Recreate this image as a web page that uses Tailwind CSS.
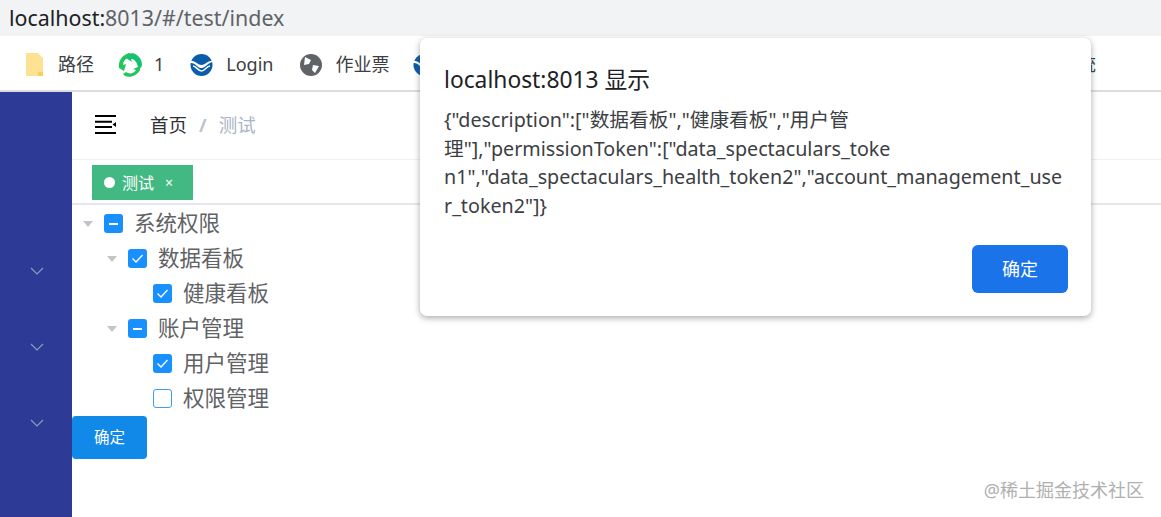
<!DOCTYPE html>
<html lang="en">
<head>
  <meta charset="UTF-8" />
  <title>localhost:8013</title>
  <script src="https://cdn.jsdelivr.net/npm/@tailwindcss/browser@4"></script>
</head>
<body class="relative h-[517px] w-[1161px] overflow-hidden bg-white font-['Noto_Sans','Noto_Sans_CJK_SC',sans-serif]">

  <!-- browser chrome -->
  <div class="flex h-9 items-center bg-[#f1f3f4] pl-[9px] text-[21.400px] text-[#5f6368]">
    <span class="text-[#202124]">localhost:</span><span>8013/#/test/index</span>
  </div>
  <div class="flex h-[56px] items-center border-b-2 border-[#dadce0] pl-[25px] pt-[3px] text-[18px] text-[#3c4043]">
    <svg class="h-[23px] w-[18px]" viewBox="0 0 18 23"><path d="M1 0h12l5 5v18H1z" fill="#fde293"/><path d="M13 19h5v4h-5z" fill="#f6cf5f"/></svg>
    <span class="ml-[15px]">路径</span>
    <svg class="ml-[24px] h-[24px] w-[24px]" viewBox="0 0 24 24" fill="#22c55e"><path d="M1 15C0 8 4 2 11 0l3 1-2 3-2 1c-3 1-5 4-5 7l3-1-2 7z"/><path d="M14 0c6 1 10 6 10 12l-1 3-3-1-1-3c-1-3-3-5-6-5l1 3-6-4z" fill="#16c172"/><path d="M22 17c-3 6-10 8-15 6l-2-2 3-2 2 1c3 1 6 0 8-3l-3-1 7-3z"/></svg>
    <span class="ml-[12px]">1</span>
    <svg class="ml-[26px] h-[24px] w-[23px]" viewBox="0 0 23 24" fill="none"><circle cx="11.500" cy="12" r="11" fill="#0b5cab"/><path d="M0 8c5-1 7 4 11.500 4S18 7 23 8v1c-5 0-7 6-11.500 6S5 9 0 10z" fill="#fff"/><path d="M3 13c3 0 5 5 8.500 5s5-5 8.500-5" stroke="#fff" stroke-width="1.500"/></svg>
    <span class="ml-[13px]">Login</span>
    <svg class="ml-[27px] h-[22px] w-[22px]" viewBox="0 0 22 22"><circle cx="11" cy="11" r="11" fill="#5f6368"/><path d="M5 3l6 3-2 4-5 1zM13 11l6 1-4 7-3-3z" fill="#fff"/></svg>
    <span class="ml-[13px]">作业票</span>
    <svg class="ml-[24px] h-[24px] w-[23px]" viewBox="0 0 23 24" fill="none"><circle cx="11.500" cy="12" r="11" fill="#0b5cab"/><path d="M0 8c5-1 7 4 11.500 4S18 7 23 8v1c-5 0-7 6-11.500 6S5 9 0 10z" fill="#fff"/></svg>
    <span class="ml-auto mr-[65px]">系统</span>
  </div>

  <div class="flex h-[425px]">
    <!-- sidebar -->
    <aside class="flex w-[72px] shrink-0 flex-col items-center gap-[66px] bg-[#2d3a96] pt-[174px] pl-[2px]">
      <svg class="h-[10px] w-[14px]" viewBox="0 0 14 10" fill="none" stroke="#8f9bb3" stroke-width="1.200"><path d="M1 2l6 6 6-6"/></svg>
      <svg class="h-[10px] w-[14px]" viewBox="0 0 14 10" fill="none" stroke="#8f9bb3" stroke-width="1.200"><path d="M1 2l6 6 6-6"/></svg>
      <svg class="h-[10px] w-[14px]" viewBox="0 0 14 10" fill="none" stroke="#8f9bb3" stroke-width="1.200"><path d="M1 2l6 6 6-6"/></svg>
    </aside>

    <main class="min-w-0 flex-1">
      <!-- navbar -->
      <div class="flex h-[68px] items-center border-b border-[#f0f1f2] pb-[2px] pl-[23px] text-[18.500px]">
        <svg class="h-[19px] w-[22px]" viewBox="0 0 22 19" fill="#000"><path d="M0 0h21v2H0zM0 5.700h17v2H0zM0 11h17v2H0zM0 17h21v2H0zM17.500 9.500l3.500-2.500v5z"/></svg>
        <span class="ml-[33px] text-[#303133]">首页</span>
        <span class="mx-[12px] font-bold text-[#c0c4cc]">/</span>
        <span class="text-[#a9b4c6]">测试</span>
      </div>

      <!-- tags -->
      <div class="flex h-[45px] items-start border-b-2 border-[#e4e6e9] pl-[20px] pt-[5px]">
        <div class="flex h-[35px] w-[101px] items-center bg-[#42b983] pl-[12px] text-white">
          <span class="h-[11px] w-[11px] rounded-full bg-white"></span>
          <span class="ml-[7px] text-[16px]">测试</span>
          <span class="ml-[11px] text-[14px]">×</span>
        </div>
      </div>

      <!-- tree -->
      <div class="grid pt-[1px] text-[21.500px] text-[#606266]">
        <div class="flex h-[35px] items-center pl-[11px]">
          <span class="h-0 w-0 border-x-[5px] border-t-[6px] border-x-transparent border-t-[#c0c4cc]"></span>
          <span class="ml-[11px] flex h-[19px] w-[19px] items-center justify-center rounded-[3px] bg-[#1890ff]"><span class="h-[2px] w-[9px] bg-white"></span></span>
          <span class="ml-[11px]">系统权限</span>
        </div>
        <div class="flex h-[35px] items-center pl-[35px]">
          <span class="h-0 w-0 border-x-[5px] border-t-[6px] border-x-transparent border-t-[#c0c4cc]"></span>
          <span class="ml-[11px] flex h-[19px] w-[19px] items-center justify-center rounded-[3px] bg-[#1890ff]"><svg class="h-[19px] w-[19px]" viewBox="0 0 19 19" fill="none" stroke="#fff" stroke-width="1.300"><path d="M4.500 9.500l3.500 3.500 6.500-7"/></svg></span>
          <span class="ml-[11px]">数据看板</span>
        </div>
        <div class="flex h-[35px] items-center pl-[81px]">
          <span class="flex h-[19px] w-[19px] items-center justify-center rounded-[3px] bg-[#1890ff]"><svg class="h-[19px] w-[19px]" viewBox="0 0 19 19" fill="none" stroke="#fff" stroke-width="1.300"><path d="M4.500 9.500l3.500 3.500 6.500-7"/></svg></span>
          <span class="ml-[11px]">健康看板</span>
        </div>
        <div class="flex h-[35px] items-center pl-[35px]">
          <span class="h-0 w-0 border-x-[5px] border-t-[6px] border-x-transparent border-t-[#c0c4cc]"></span>
          <span class="ml-[11px] flex h-[19px] w-[19px] items-center justify-center rounded-[3px] bg-[#1890ff]"><span class="h-[2px] w-[9px] bg-white"></span></span>
          <span class="ml-[11px]">账户管理</span>
        </div>
        <div class="flex h-[35px] items-center pl-[81px]">
          <span class="flex h-[19px] w-[19px] items-center justify-center rounded-[3px] bg-[#1890ff]"><svg class="h-[19px] w-[19px]" viewBox="0 0 19 19" fill="none" stroke="#fff" stroke-width="1.300"><path d="M4.500 9.500l3.500 3.500 6.500-7"/></svg></span>
          <span class="ml-[11px]">用户管理</span>
        </div>
        <div class="flex h-[35px] items-center pl-[81px]">
          <span class="h-[19px] w-[19px] rounded-[3px] border-[1.500px] border-[#3d9df5] bg-white"></span>
          <span class="ml-[11px]">权限管理</span>
        </div>
      </div>

      <button class="h-[43px] w-[75px] rounded-[4px] bg-[#1189e9] text-[15.500px] text-white">确定</button>
    </main>
  </div>

  <!-- alert dialog -->
  <div class="absolute left-[420px] top-[38px] flex h-[278px] w-[671px] flex-col rounded-[7px] bg-white pl-[24px] pr-[23px] pt-[27px] shadow-[0_2px_6px_rgba(60,64,67,0.45)]">
    <h1 class="text-[22.800px] leading-[30px] text-[#202124]">localhost:8013 显示</h1>
    <p class="mt-[11px] whitespace-nowrap text-[19.700px] leading-[28.500px] text-[#3c4043]">{"description":["数据看板","健康看板","用户管<br>理"],"permissionToken":["data_spectaculars_toke<br>n1","data_spectaculars_health_token2","account_management_use<br>r_token2"]}</p>
    <button class="ml-auto mt-[25px] h-[48px] w-[96px] rounded-[6px] bg-[#1a73e8] pt-[1px] text-[18px] text-white">确定</button>
  </div>

  <!-- watermark -->
  <div class="absolute right-[17px] top-[477px] text-[18px] text-[#b0b0b0]">@稀土掘金技术社区</div>
</body>
</html>
